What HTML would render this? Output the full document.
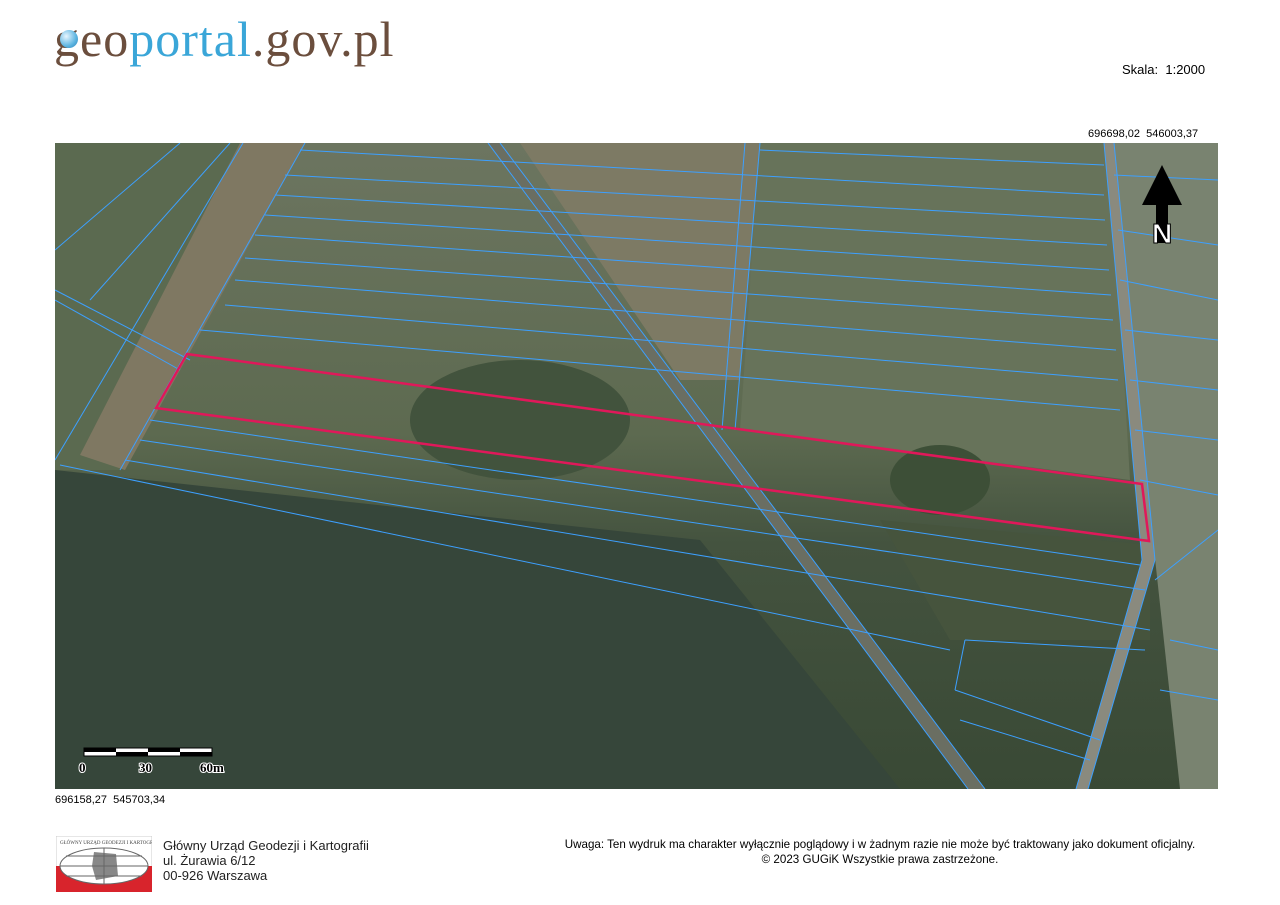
<!DOCTYPE html>
<html><head><meta charset="utf-8"><style>
body{margin:0;background:#fff;width:1280px;height:905px;position:relative;overflow:hidden;font-family:"Liberation Sans",sans-serif}
.a{position:absolute}
</style></head><body>
<div class="a" style="left:54px;top:10px;font-family:'Liberation Serif',serif;font-size:50px;color:#6b4e3d;letter-spacing:1px">
<span style="position:relative">g<span style="position:absolute;left:6px;top:19px;width:18px;height:18px;border-radius:50%;background:radial-gradient(circle at 35% 35%,#e8f6ff,#5cb4e0 60%,#2a7fb8)"></span></span>eo<span style="color:#3aa6d8">portal</span>.gov.pl</div>
<div class="a" style="left:1122px;top:62px;font-size:13px">Skala:&nbsp; 1:2000</div>
<div class="a" style="left:1088px;top:128px;font-size:11px">696698,02&nbsp;&nbsp;546003,37</div>
<div class="a" style="left:55px;top:794px;font-size:11px">696158,27&nbsp;&nbsp;545703,34</div>
<svg class="a" style="left:55px;top:143px" width="1163" height="646" viewBox="55 143 1163 646">
<defs>
<linearGradient id="g" x1="0" y1="0" x2="0" y2="1">
<stop offset="0" stop-color="#6c7560"/><stop offset="0.45" stop-color="#5d6a50"/><stop offset="0.62" stop-color="#44533f"/><stop offset="1" stop-color="#394935"/></linearGradient>
</defs>
<rect x="55" y="143" width="1163" height="646" fill="url(#g)"/>
<polygon points="55,143 300,143 120,470 55,470" fill="#5b6a50"/>
<polygon points="240,143 305,143 125,470 80,455" fill="#7f7862"/>
<polygon points="520,143 760,143 740,380 680,380" fill="#7d7a64"/>
<polygon points="760,143 1110,143 1130,480 740,430" fill="#67735a"/>
<polygon points="1110,143 1218,143 1218,789 1180,789" fill="#798370"/>
<polygon points="55,470 700,540 900,789 55,789" fill="#36463a"/>
<polygon points="880,520 1150,545 1150,640 950,640" fill="#46543d"/>
<ellipse cx="520" cy="420" rx="110" ry="60" fill="#42533d"/>
<ellipse cx="940" cy="480" rx="50" ry="35" fill="#3d4f37"/>
<polygon points="488,143 500,143 985,789 968,789" fill="#6a6e62"/>
<polygon points="1104,143 1114,143 1155,560 1088,789 1076,789 1142,560" fill="#8a8a7e"/>
<g stroke="#3da0ff" stroke-width="1" fill="none">
<line x1="488" y1="143" x2="968" y2="789"/><line x1="500" y1="143" x2="985" y2="789"/>
<line x1="1104" y1="143" x2="1142" y2="560"/><line x1="1114" y1="143" x2="1155" y2="560"/>
<line x1="1142" y1="560" x2="1076" y2="789"/><line x1="1155" y1="560" x2="1088" y2="789"/>
<line x1="1155" y1="580" x2="1218" y2="530"/>
<line x1="745" y1="143" x2="722" y2="430"/><line x1="760" y1="143" x2="735" y2="430"/>
<line x1="55" y1="460" x2="243" y2="143"/><line x1="120" y1="470" x2="305" y2="143"/>
<line x1="55" y1="290" x2="190" y2="360"/><line x1="55" y1="300" x2="180" y2="370"/>
<line x1="55" y1="250" x2="180" y2="143"/><line x1="90" y1="300" x2="230" y2="143"/>
<line x1="300" y1="150" x2="1104" y2="195"/>
<line x1="285" y1="175" x2="1105" y2="220"/>
<line x1="275" y1="195" x2="1107" y2="245"/>
<line x1="265" y1="215" x2="1109" y2="270"/>
<line x1="255" y1="235" x2="1111" y2="295"/>
<line x1="245" y1="258" x2="1113" y2="320"/>
<line x1="235" y1="280" x2="1116" y2="350"/>
<line x1="225" y1="305" x2="1118" y2="380"/>
<line x1="200" y1="330" x2="1120" y2="410"/>
<line x1="150" y1="420" x2="1140" y2="565"/>
<line x1="140" y1="440" x2="1145" y2="590"/>
<line x1="125" y1="460" x2="1150" y2="630"/>
<line x1="60" y1="465" x2="950" y2="650"/>
<line x1="760" y1="150" x2="1104" y2="165"/>
<line x1="1114" y1="175" x2="1218" y2="180"/>
<line x1="1118" y1="230" x2="1218" y2="245"/>
<line x1="1120" y1="280" x2="1218" y2="300"/>
<line x1="1125" y1="330" x2="1218" y2="340"/>
<line x1="1130" y1="380" x2="1218" y2="390"/>
<line x1="1135" y1="430" x2="1218" y2="440"/>
<line x1="1140" y1="480" x2="1218" y2="495"/>
<line x1="965" y1="640" x2="1145" y2="650"/>
<line x1="965" y1="640" x2="955" y2="690"/>
<line x1="955" y1="690" x2="1100" y2="740"/>
<line x1="960" y1="720" x2="1090" y2="760"/>
<line x1="1170" y1="640" x2="1218" y2="650"/>
<line x1="1160" y1="690" x2="1218" y2="700"/>
</g>
<polygon points="187,354 1142,484 1149,541 156,408" fill="none" stroke="#e0185a" stroke-width="2.5"/>
<g>
<polygon points="1162,165 1142,205 1182,205" fill="#000"/>
<rect x="1156" y="205" width="12" height="38" fill="#000"/>
<text x="1152" y="243" font-family="Liberation Sans" font-size="28" font-weight="bold" fill="#fff" stroke="#000" stroke-width="1">N</text>
</g>
<rect x="84" y="748" width="128" height="8" fill="#fff" stroke="#000" stroke-width="1"/>
<rect x="84" y="748" width="32" height="4" fill="#000"/><rect x="148" y="748" width="32" height="4" fill="#000"/>
<rect x="116" y="752" width="32" height="4" fill="#000"/><rect x="180" y="752" width="32" height="4" fill="#000"/>
<g font-family="Liberation Serif" font-weight="bold" font-size="13" fill="#000" stroke="#fff" stroke-width="2" paint-order="stroke">
<text x="79" y="772">0</text><text x="139" y="772">30</text><text x="200" y="772">60m</text></g>
</svg>
<svg class="a" style="left:56px;top:836px" width="96" height="56">
<rect width="96" height="56" fill="#fff" stroke="#ccc"/>
<rect x="0" y="30" width="96" height="26" fill="#d8242c"/>
<ellipse cx="48" cy="30" rx="44" ry="18" fill="#fff" stroke="#666"/>
<path d="M38,16 L60,18 62,40 40,44 36,30Z" fill="#888"/>
<g stroke="#666" fill="none"><line x1="4" y1="30" x2="92" y2="30"/><line x1="10" y1="20" x2="86" y2="20"/><line x1="10" y1="40" x2="86" y2="40"/><line x1="48" y1="12" x2="48" y2="48"/></g>
<text x="4" y="8" font-size="5" font-family="Liberation Serif" fill="#444">GŁÓWNY URZĄD GEODEZJI I KARTOGRAFII</text>
</svg>
<div class="a" style="left:163px;top:838px;font-size:13px;line-height:15px;color:#222">Główny Urząd Geodezji i Kartografii<br>ul. Żurawia 6/12<br>00-926 Warszawa</div>
<div class="a" style="left:520px;top:837px;width:720px;text-align:center;font-size:11.6px;line-height:15px">Uwaga: Ten wydruk ma charakter wyłącznie poglądowy i w żadnym razie nie może być traktowany jako dokument oficjalny.<br>© 2023 GUGiK Wszystkie prawa zastrzeżone.</div>
</body></html>
